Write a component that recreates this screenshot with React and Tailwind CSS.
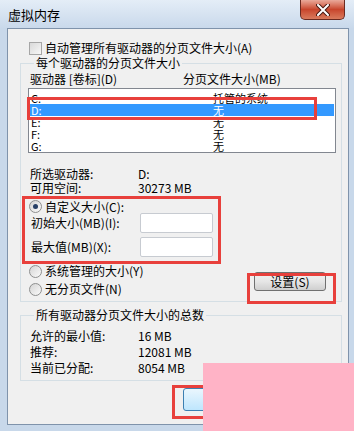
import React from "react";

function Radio({ checked }) {
  return (
    <span className="w-[13px] h-[13px] shrink-0 rounded-full border border-[#8e8f8f] bg-gradient-to-br from-[#d4d4d4] to-[#fbfbfb] flex items-center justify-center">
      {checked && <span className="w-[5px] h-[5px] rounded-full bg-[#263f66]" />}
    </span>
  );
}

function Row({ label, value }) {
  return (
    <div className="grid grid-cols-[108px_1fr] pl-[2px] h-[16px] leading-[16px]">
      <span>{label}</span>
      <span>{value}</span>
    </div>
  );
}

export default function App() {
  const drives = [
    ["C:", "托管的系统"],
    ["D:", "无"],
    ["E:", "无"],
    ["F:", "无"],
    ["G:", "无"],
  ];
  return (
    <div className="relative w-[354px] h-[431px] overflow-hidden bg-[#c8d8ea] text-[12px] text-black font-['Noto_Sans_CJK_SC',sans-serif]">
      {/* title bar */}
      <div className="h-[28px] flex items-start justify-between bg-gradient-to-b from-[#e4edf7] to-[#c9d9eb]">
        <span className="ml-[8px] mt-[7px] leading-[16px] text-[13px]">虚拟内存</span>
        <div className="mr-[9px] w-[45px] h-[20px] rounded-b-[5px] border border-t-0 border-[#6b2a20] bg-gradient-to-b from-[#e9a99a] via-[#c8452c] to-[#d97a5c] flex items-center justify-center">
          <svg width="14" height="12" viewBox="0 0 14 12">
            <path d="M2 1 L12 11 M12 1 L2 11" stroke="#4a1a12" strokeWidth="4" strokeLinecap="round" />
            <path d="M2 1 L12 11 M12 1 L2 11" stroke="#ffffff" strokeWidth="2" strokeLinecap="round" />
          </svg>
        </div>
      </div>

      {/* content panel */}
      <div className="ml-[7px] w-[342px] h-[397px] border border-[#7f93ab] bg-[#f0f0f0] flex flex-col">
        <div className="mt-[12px] ml-[21px] flex items-center gap-[3px] h-[14px] leading-[14px]">
          <span className="w-[13px] h-[13px] border border-[#a6a6a6] bg-gradient-to-br from-[#d9d9d9] to-[#f7f7f7]" />
          <span>自动管理所有驱动器的分页文件大小(A)</span>
        </div>

        {/* group 1 */}
        <fieldset className="mt-[1px] ml-[12px] mr-[6px] border border-[#d5dfe5] pl-[7px] pr-[5px] pb-[5px]">
          <legend className="ml-[6px] px-[2px] leading-[14px]">每个驱动器的分页文件大小</legend>
          <div className="mt-[2px] grid grid-cols-[153px_1fr] pl-[2px] h-[14px] leading-[14px]">
            <span>驱动器 [卷标](D)</span>
            <span>分页文件大小(MB)</span>
          </div>
          <div className="mt-[2px] h-[65px] border border-[#828790] bg-white pt-[3px] text-[11px]">
            {drives.map(([d, s], i) => (
              <div
                key={d}
                className={
                  i === 1
                    ? "grid grid-cols-[182px_1fr] h-[12px] leading-[12px] pl-[1px] mx-[1px] bg-[#3399ff] text-white"
                    : "grid grid-cols-[182px_1fr] h-[12px] leading-[12px] pl-[1px] mx-[1px]"
                }
              >
                <span>{d}</span>
                <span>{s}</span>
              </div>
            ))}
          </div>
          <div className="mt-[14px] grid grid-cols-[108px_1fr] pl-[2px] h-[14px] leading-[14px]">
            <span>所选驱动器:</span>
            <span>D:</span>
          </div>
          <div className="grid grid-cols-[108px_1fr] pl-[2px] h-[14px] leading-[14px]">
            <span>可用空间:</span>
            <span>30273 MB</span>
          </div>
          <div className="mt-[5px] flex items-center gap-[3px] pl-[1px] h-[13px] leading-[13px]">
            <Radio checked />
            <span>自定义大小(C):</span>
          </div>
          <div className="grid grid-cols-[109px_73px] items-center pl-[3px] h-[20px]">
            <span className="leading-[14px]">初始大小(MB)(I):</span>
            <span className="h-[20px] border border-[#c7cbd1] rounded-[2px] bg-white" />
          </div>
          <div className="mt-[4px] grid grid-cols-[109px_73px] items-center pl-[3px] h-[20px]">
            <span className="leading-[14px]">最大值(MB)(X):</span>
            <span className="h-[20px] border border-[#c7cbd1] rounded-[2px] bg-white" />
          </div>
          <div className="flex items-start justify-between">
            <div className="flex flex-col">
              <div className="mt-[7px] flex items-center gap-[3px] pl-[1px] h-[14px] leading-[14px]">
                <Radio />
                <span>系统管理的大小(Y)</span>
              </div>
              <div className="mt-[4px] flex items-center gap-[3px] pl-[1px] h-[14px] leading-[14px]">
                <Radio />
                <span>无分页文件(N)</span>
              </div>
            </div>
            <button className="mt-[15px] mr-[10px] w-[72px] h-[19px] rounded-[3px] border border-[#707070] bg-gradient-to-b from-[#f2f2f2] via-[#e6e6e6] to-[#cfcfcf] leading-[17px] text-[12px]">
              设置(S)
            </button>
          </div>
        </fieldset>

        {/* group 2 */}
        <fieldset className="mt-[6px] ml-[12px] mr-[6px] border border-[#d5dfe5] pl-[7px] pr-[5px] pt-[6px] pb-[4px]">
          <legend className="ml-[6px] px-[2px] leading-[14px]">所有驱动器分页文件大小的总数</legend>
          <Row label="允许的最小值:" value="16 MB" />
          <Row label="推荐:" value="12081 MB" />
          <Row label="当前已分配:" value="8054 MB" />
        </fieldset>

        <div className="mt-[7px] ml-[175px] flex gap-[6px]">
          <button className="w-[75px] h-[23px] rounded-[3px] border border-[#3c7fb1] bg-gradient-to-b from-[#eaf6fd] to-[#bee6fd] leading-[21px]">
            确定
          </button>
          <button className="w-[75px] h-[23px] rounded-[3px] border border-[#707070] bg-gradient-to-b from-[#f2f2f2] to-[#d0d0d0] leading-[21px]">
            取消
          </button>
        </div>
      </div>

      {/* annotation overlays */}
      <div className="absolute left-[27px] top-[97px] w-[290px] h-[23px] border-[3px] border-[#e8403c]" />
      <div className="absolute left-[22px] top-[196px] w-[199px] h-[68px] border-[3px] border-[#e8403c]" />
      <div className="absolute left-[247px] top-[273px] w-[89px] h-[31px] border-[3px] border-[#e8403c]" />
      <div className="absolute left-[172px] top-[385px] w-[60px] h-[34px] border-[3px] border-[#e8403c]" />
      <div className="absolute left-[203px] top-[363px] w-[151px] h-[68px] bg-[#ffb3c6]" />
    </div>
  );
}
